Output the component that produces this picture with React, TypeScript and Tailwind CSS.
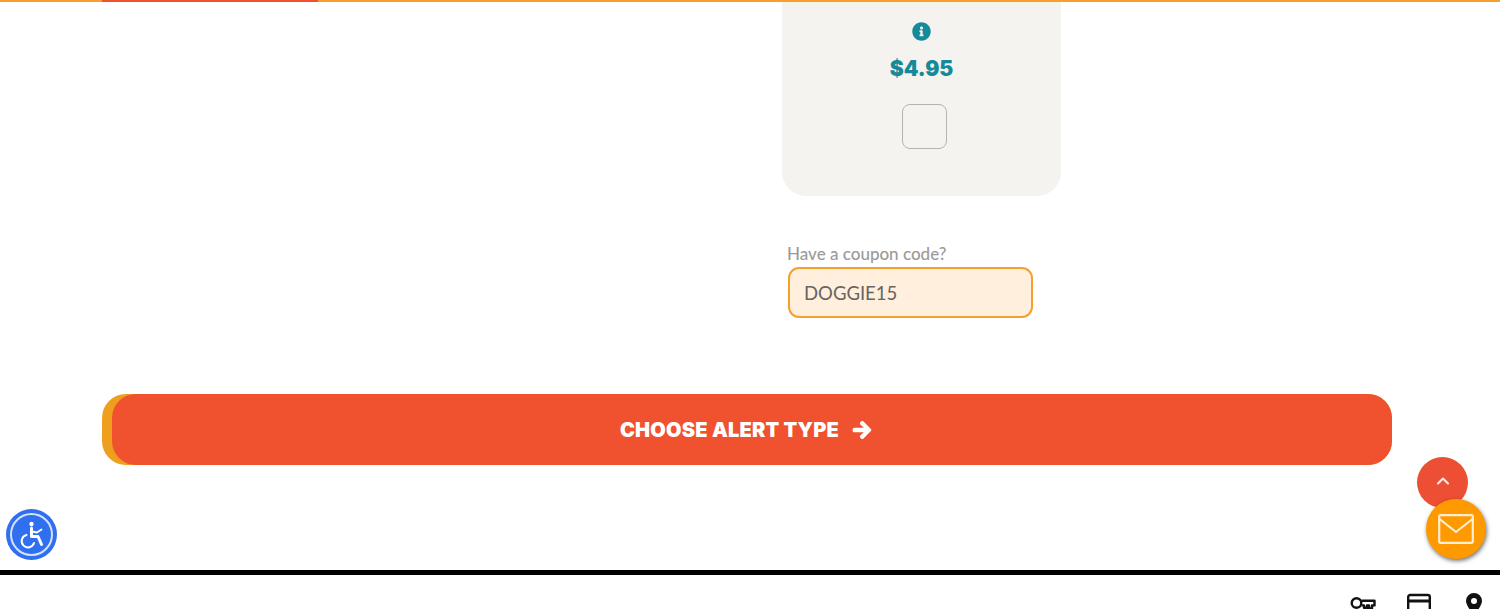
import { ChevronUp } from "lucide-react";
import { FaArrowRight, FaInfoCircle } from "react-icons/fa";

const WheelchairIcon = () => (
  <svg viewBox="0 0 32 32" className="h-[32px] w-[32px]" fill="none" stroke="#fff" strokeLinecap="round" strokeLinejoin="round">
    <circle cx="15.5" cy="5" r="2.2" fill="#fff" stroke="none" />
    <path d="M15.5 9v8.5h6.5l3.5 8" strokeWidth="3" />
    <path d="M16 12.5l5 1 4.5-3" strokeWidth="1.8" />
    <path d="M10.5 16a6.3 6.3 0 1 0 7.5 8" strokeWidth="2" />
  </svg>
);

const MailIcon = () => (
  <svg viewBox="0 0 36 30" className="h-[30px] w-[36px]" fill="none" stroke="#ffefd2" strokeWidth="2.2" strokeLinejoin="round">
    <rect x="1.2" y="1.2" width="33.6" height="27.6" rx="1.5" />
    <path d="M1.5 5l16.5 13 16.5-13" />
  </svg>
);

const KeyIcon = () => (
  <svg viewBox="0 0 26 14" className="h-[14px] w-[26px]" fill="none" stroke="#111" strokeWidth="2.4">
    <circle cx="6.5" cy="7" r="4.8" />
    <path d="M11.5 4.8h13v4.6h-2.5v3h-3v-3h-2v2.4h-3v-2.4h-2.5" strokeLinejoin="round" />
  </svg>
);

const CardIcon = () => (
  <svg viewBox="0 0 24 24" className="h-[24px] w-[24px]" fill="none" stroke="#111" strokeWidth="2.4">
    <rect x="1.2" y="2" width="21.6" height="24" rx="2" />
    <path d="M1 8h22" strokeWidth="3" />
  </svg>
);

const PinIcon = () => (
  <svg viewBox="0 0 16 22" className="h-[22px] w-[16px]" fill="#111">
    <path fillRule="evenodd" d="M8 0a8 8 0 0 0-8 8c0 5 8 14 8 14s8-9 8-14a8 8 0 0 0-8-8zm0 5a3 3 0 1 1 0 6 3 3 0 0 1 0-6z" />
  </svg>
);

export default function App() {
  return (
    <div className="relative flex h-[609px] w-[1500px] flex-col overflow-hidden bg-white font-['Lato',sans-serif]">
      {/* progress bar */}
      <div className="flex h-[2px] shrink-0 bg-[#f5a02c]">
        <div className="ml-[102px] w-[216px] bg-[#f0522f]" />
      </div>

      <div className="ml-[782px] flex h-[194px] w-[279px] shrink-0 flex-col items-center rounded-b-[24px] bg-[#f4f3ef]">
        <div className="mt-[20px] text-[19px] text-[#148a9a]">
          <FaInfoCircle />
        </div>
        <div className="mt-[15px] text-[21px] leading-[26px] font-black text-[#148a9a] font-['Inter',sans-serif]">
          $4.95
        </div>
        <div className="mt-[22px] ml-[5px] h-[45px] w-[45px] rounded-[8px] border border-[#b5b3ae] bg-[#f4f3ef]" />
      </div>

      <div className="mt-[47px] ml-[787px] text-[17px] leading-[22px] font-medium text-[#9a9a9a]">
        Have a coupon code?
      </div>
      <input
        readOnly
        value="DOGGIE15"
        className="mt-[2px] ml-[788px] h-[51px] w-[245px] shrink-0 rounded-[11px] border-2 border-[#f5a02c] bg-[#ffefdc] px-[14px] text-[18.5px] text-[#666461] outline-none"
      />

      <div className="mt-[76px] ml-[102px] h-[71px] w-[1290px] shrink-0 rounded-[24px] bg-[#ee9f1f] pl-[10px]">
        <button className="flex h-full w-full items-center justify-center gap-[13px] rounded-[24px] bg-[#f0522f] pr-[12px] text-[20px] font-black tracking-[0.2px] text-white font-['Inter',sans-serif]">
          CHOOSE ALERT TYPE
          <FaArrowRight size={20} stroke="currentColor" strokeWidth={30} />
        </button>
      </div>

      <div className="mt-[105px] h-[5px] shrink-0 bg-black" />

      <div className="flex flex-1 items-start justify-end pt-[18px] pr-[18px]">
        <div className="mt-[3px] mr-[31px]"><KeyIcon /></div>
        <div className="mr-[35px]"><CardIcon /></div>
        <PinIcon />
      </div>

      {/* floating widgets */}
      <div className="absolute top-[509px] left-[6px] flex h-[51px] w-[51px] items-center justify-center rounded-full bg-[#2f6ff0]">
        <div className="flex h-[43px] w-[43px] items-center justify-center rounded-full border-2 border-white/80">
          <WheelchairIcon />
        </div>
      </div>
      <div className="absolute top-[457px] left-[1417px] flex h-[51px] w-[51px] items-center justify-center rounded-full bg-[#ec4f33] pb-[3px] text-[#ffeee4]">
        <ChevronUp size={20} strokeWidth={2.5} />
      </div>
      <div className="absolute top-[499px] left-[1426px] flex h-[60px] w-[60px] items-center justify-center rounded-full bg-[#ff9900] shadow-[1px_2px_4px_rgba(0,0,0,0.55)]">
        <MailIcon />
      </div>
    </div>
  );
}
